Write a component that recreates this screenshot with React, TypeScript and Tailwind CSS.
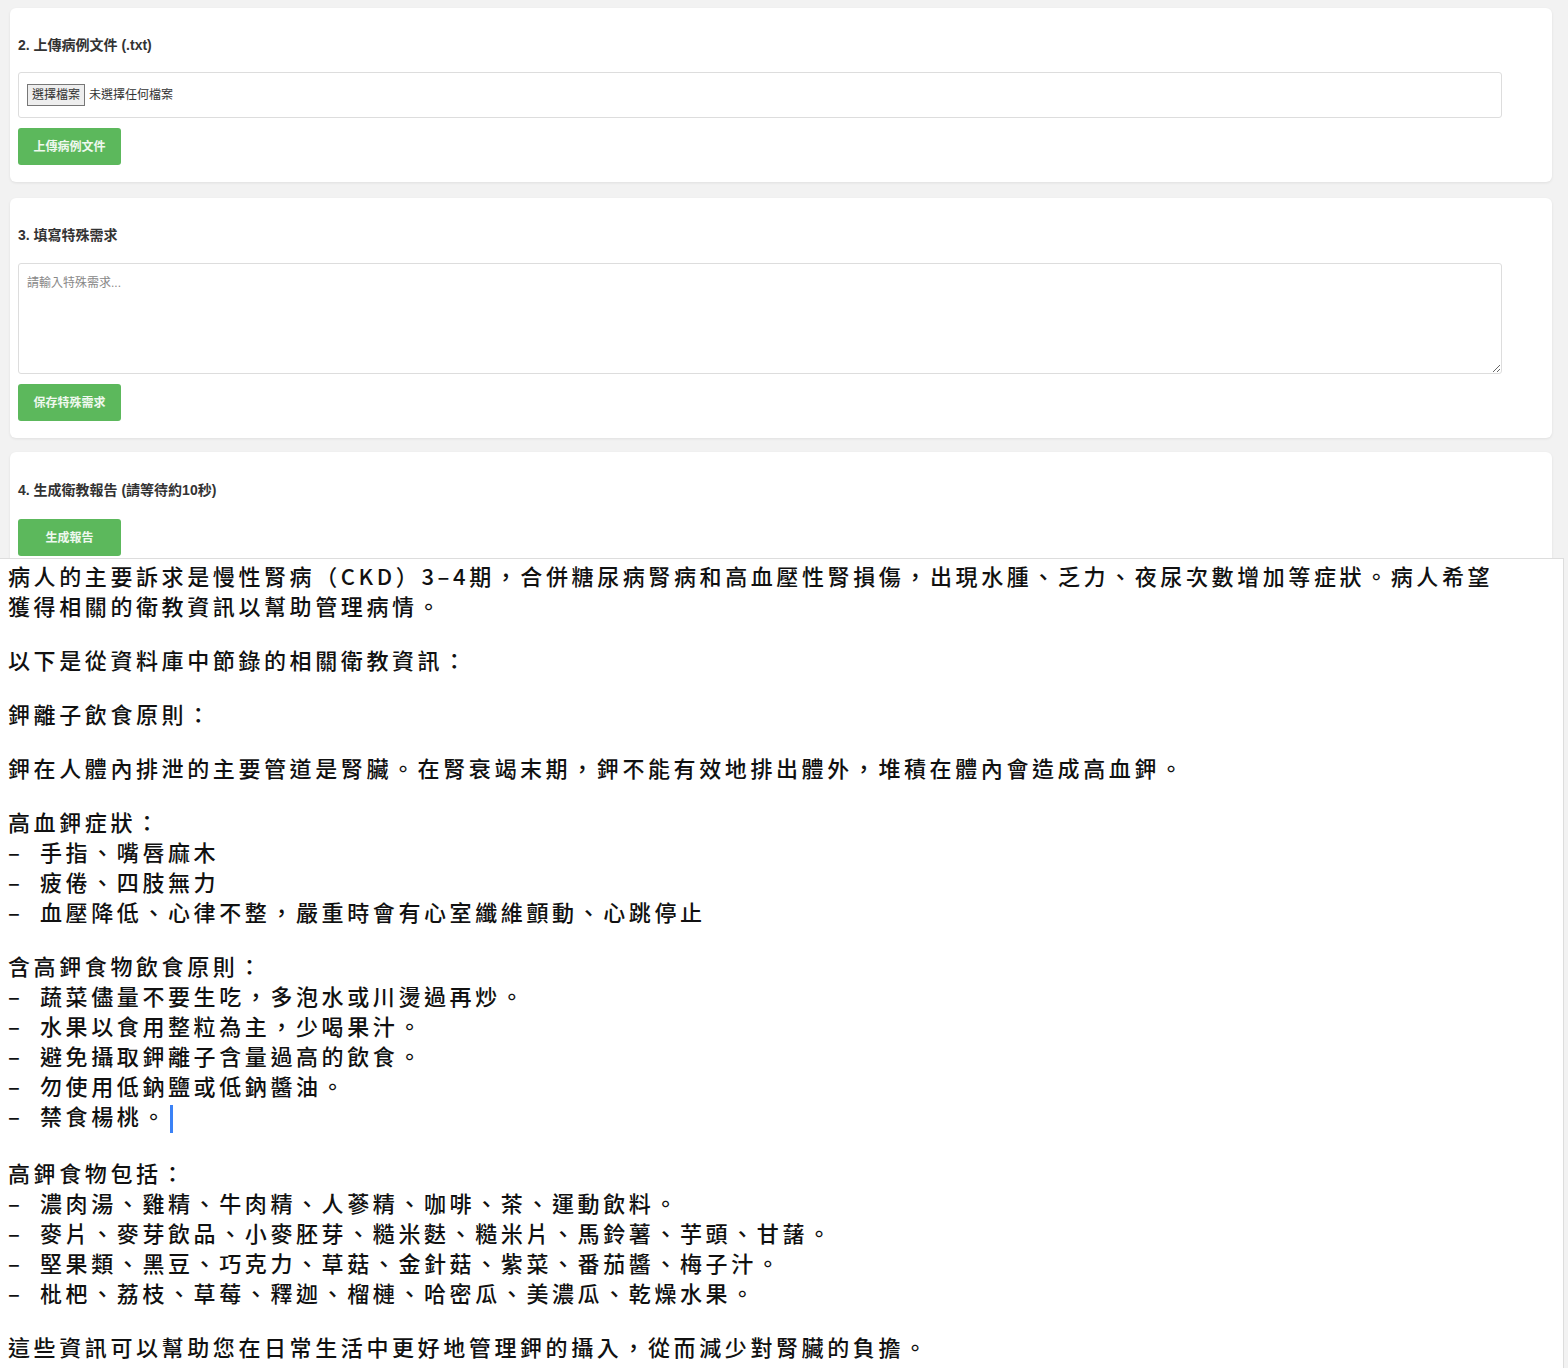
import React from 'react';

const ui = { fontFamily: '"Liberation Sans", "Noto Sans CJK TC", sans-serif' };
const body = { fontFamily: '"Noto Sans CJK TC", "Noto Sans", sans-serif' };

function Card({ children, className = '' }: { children: React.ReactNode; className?: string }) {
  return <div className={`ml-[10px] w-[1542px] rounded-md bg-white shadow-[0_1px_3px_rgba(0,0,0,0.08)] px-[8px] ${className}`}>{children}</div>;
}

function Btn({ label }: { label: string }) {
  return (
    <button className="h-[37px] w-[103px] rounded-[3px] bg-[#5cb85c] text-[12px] font-bold text-white/90">{label}</button>
  );
}

const Dash = ({ t, cursor }: { t: string; cursor?: boolean }) => (
  <div className="flex">
    <span className="w-[32px] shrink-0">–</span>
    <span>
      {t}
      {cursor && <span className="ml-[2px] inline-block h-[28px] w-[3px] bg-[#3b82f6] align-middle" />}
    </span>
  </div>
);

export default function App() {
  return (
    <div className="min-h-[1368px] w-[1568px] bg-[#f2f2f2] pt-[8px]" style={ui}>
      <Card className="h-[174px] pt-[27px]">
        <div className="text-[14px] font-bold text-[#333]">2. 上傳病例文件 (.txt)</div>
        <div className="mt-[16px] flex h-[46px] w-[1484px] items-center rounded-[3px] border border-[#ddd] px-[8px] text-[12px] text-[#333]">
          <span className="border border-[#777] bg-[#eee] px-[4px] py-[1px]">選擇檔案</span>
          <span className="ml-[4px]">未選擇任何檔案</span>
        </div>
        <div className="mt-[10px]"><Btn label="上傳病例文件" /></div>
      </Card>
      <Card className="mt-[16px] h-[240px] pt-[27px]">
        <div className="text-[14px] font-bold text-[#333]">3. 填寫特殊需求</div>
        <textarea
          className="mt-[17px] block h-[111px] w-[1484px] resize-y rounded-[3px] border border-[#ddd] px-[8px] py-[10px] text-[12px] outline-none placeholder:text-[#888]"
          placeholder="請輸入特殊需求..."
        />
        <div className="mt-[10px]"><Btn label="保存特殊需求" /></div>
      </Card>
      <Card className="mt-[14px] h-[106px] rounded-b-none pt-[28px]">
        <div className="text-[14px] font-bold text-[#333]">4. 生成衛教報告 (請等待約10秒)</div>
        <div className="mt-[18px]"><Btn label="生成報告" /></div>
      </Card>
      <div
        className="flex w-[1564px] flex-col gap-[24px] border-r border-t border-[#ddd] bg-white pb-[8px] pl-[8px] pt-[1px] text-[22px] font-medium leading-[30px] tracking-[3.6px] text-[#111]"
        style={body}
      >
        <div>
          <div className="whitespace-nowrap">病人的主要訴求是慢性腎病（CKD）3–4期，合併糖尿病腎病和高血壓性腎損傷，出現水腫、乏力、夜尿次數增加等症狀。病人希望</div>
          <div>獲得相關的衛教資訊以幫助管理病情。</div>
        </div>
        <div>以下是從資料庫中節錄的相關衛教資訊：</div>
        <div>鉀離子飲食原則：</div>
        <div>鉀在人體內排泄的主要管道是腎臟。在腎衰竭末期，鉀不能有效地排出體外，堆積在體內會造成高血鉀。</div>
        <div>
          <div>高血鉀症狀：</div>
          <Dash t="手指、嘴唇麻木" />
          <Dash t="疲倦、四肢無力" />
          <Dash t="血壓降低、心律不整，嚴重時會有心室纖維顫動、心跳停止" />
        </div>
        <div>
          <div>含高鉀食物飲食原則：</div>
          <Dash t="蔬菜儘量不要生吃，多泡水或川燙過再炒。" />
          <Dash t="水果以食用整粒為主，少喝果汁。" />
          <Dash t="避免攝取鉀離子含量過高的飲食。" />
          <Dash t="勿使用低鈉鹽或低鈉醬油。" />
          <Dash t="禁食楊桃。" cursor />
        </div>
        <div>
          <div>高鉀食物包括：</div>
          <Dash t="濃肉湯、雞精、牛肉精、人蔘精、咖啡、茶、運動飲料。" />
          <Dash t="麥片、麥芽飲品、小麥胚芽、糙米麩、糙米片、馬鈴薯、芋頭、甘藷。" />
          <Dash t="堅果類、黑豆、巧克力、草菇、金針菇、紫菜、番茄醬、梅子汁。" />
          <Dash t="枇杷、荔枝、草莓、釋迦、榴槤、哈密瓜、美濃瓜、乾燥水果。" />
        </div>
        <div>這些資訊可以幫助您在日常生活中更好地管理鉀的攝入，從而減少對腎臟的負擔。</div>
      </div>
    </div>
  );
}
